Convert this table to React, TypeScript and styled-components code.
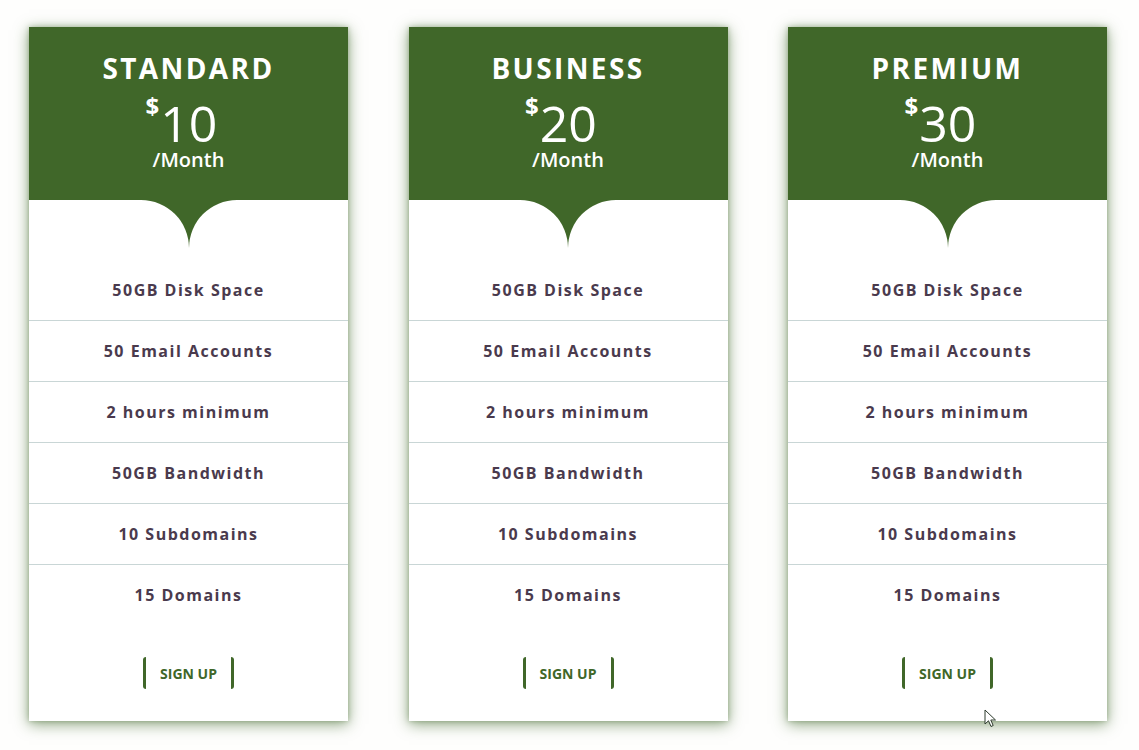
import React from "react";
import styled, { createGlobalStyle } from "styled-components";

const GREEN = "#406729";
const TEXT = "#4a3a4d";

const Global = createGlobalStyle`
  html, body { margin: 0; padding: 0; background: #fefefd; }
  body { font-family: "Open Sans", "Liberation Sans", sans-serif; }
`;

const Page = styled.div`
  position: relative;
  width: 1139px;
  height: 750px;
  box-sizing: border-box;
  padding: 27px 0 0 29px;
  display: flex;
  gap: 60.5px;
  align-items: flex-start;
`;

const Card = styled.div`
  width: 319px;
  height: 694px;
  background: #ffffff;
  display: flex;
  flex-direction: column;
  box-shadow: 0 3px 14px rgba(64, 103, 41, 0.6), 0 0 5px rgba(64, 103, 41, 0.35);
`;

const Header = styled.div`
  height: 173px;
  background: ${GREEN};
  color: #ffffff;
  display: flex;
  flex-direction: column;
  align-items: center;
  box-sizing: border-box;
  padding-top: 21px;
`;

const Title = styled.div`
  font-size: 28px;
  font-weight: 700;
  letter-spacing: 2.4px;
  line-height: 40px;
  height: 40px;
`;

const Price = styled.div`
  display: flex;
  align-items: flex-start;
  font-size: 50px;
  font-weight: 400;
  line-height: 48px;
  height: 48px;
  margin-top: 11px;
  margin-left: -14px;
`;

const Dollar = styled.span`
  font-size: 24px;
  font-weight: 700;
  line-height: 24px;
  margin-top: -5px;
  margin-right: 1px;
`;

const Per = styled.div`
  font-size: 20px;
  font-weight: 600;
  line-height: 26px;
`;

const Notch = styled.div`
  height: 48px;
  background: ${GREEN};
  display: flex;
`;

const NotchSide = styled.div<{ $side: "left" | "right" }>`
  flex: 1;
  background: #ffffff;
  border-top-right-radius: ${(p) => (p.$side === "left" ? "48px" : "0")};
  border-top-left-radius: ${(p) => (p.$side === "right" ? "48px" : "0")};
`;

const Features = styled.ul`
  list-style: none;
  margin: 12px 0 0;
  padding: 0;
`;

const Feature = styled.li<{ $last?: boolean }>`
  height: 60px;
  display: flex;
  align-items: center;
  justify-content: center;
  border-bottom: ${(p) => (p.$last ? "none" : "1px solid #c9d6d6")};
  color: ${TEXT};
  font-size: 16px;
  font-weight: 700;
  letter-spacing: 1.5px;
`;

const Footer = styled.div`
  display: flex;
  justify-content: center;
  margin-top: 32px;
`;

const SignUp = styled.button`
  width: 91px;
  height: 32px;
  background: transparent;
  border: none;
  border-left: 3px solid ${GREEN};
  border-right: 3px solid ${GREEN};
  border-radius: 3px;
  color: ${GREEN};
  font-family: "Open Sans", "Liberation Sans", sans-serif;
  font-size: 14px;
  font-weight: 700;
  padding: 0;
  cursor: pointer;
`;

const Cursor = styled.svg`
  position: absolute;
  left: 984px;
  top: 709px;
`;

const features = [
  "50GB Disk Space",
  "50 Email Accounts",
  "2 hours minimum",
  "50GB Bandwidth",
  "10 Subdomains",
  "15 Domains",
];

const plans = [
  { name: "STANDARD", price: "10" },
  { name: "BUSINESS", price: "20" },
  { name: "PREMIUM", price: "30" },
];

export default function App() {
  return (
    <>
      <Global />
      <Page>
        {plans.map((p) => (
          <Card key={p.name}>
            <Header>
              <Title>{p.name}</Title>
              <Price>
                <Dollar>$</Dollar>
                {p.price}
              </Price>
              <Per>/Month</Per>
            </Header>
            <Notch>
              <NotchSide $side="left" />
              <NotchSide $side="right" />
            </Notch>
            <Features>
              {features.map((f, i) => (
                <Feature key={f} $last={i === features.length - 1}>
                  {f}
                </Feature>
              ))}
            </Features>
            <Footer>
              <SignUp>SIGN UP</SignUp>
            </Footer>
          </Card>
        ))}
        <Cursor width="14" height="20" viewBox="0 0 14 20">
          <path
            d="M1 1 L1 15 L4.5 11.8 L7 17.5 L9.2 16.5 L6.8 11 L11.5 11 Z"
            fill="#ffffff"
            stroke="#2c3a2c"
            strokeWidth="1"
            strokeLinejoin="round"
          />
        </Cursor>
      </Page>
    </>
  );
}
